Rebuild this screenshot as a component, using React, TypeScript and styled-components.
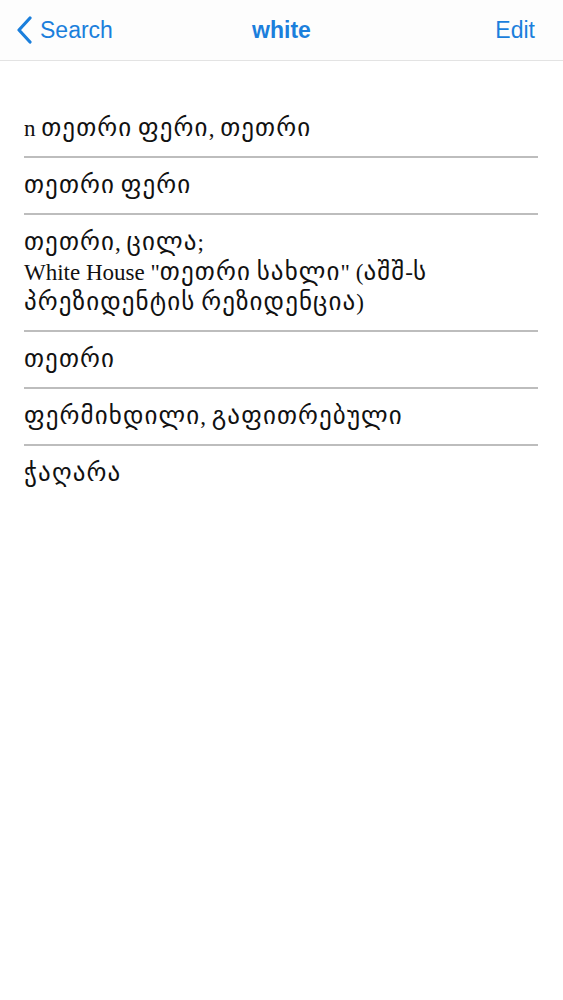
import React from "react";
import styled, { createGlobalStyle } from "styled-components";

const Global = createGlobalStyle`
  html, body { margin: 0; padding: 0; background: #ffffff; }
  body { font-family: "Liberation Sans", "DejaVu Sans", sans-serif; }
`;

const Page = styled.div`
  width: 563px;
  min-height: 1000px;
  background: #ffffff;
`;

const NavBar = styled.header`
  height: 60px;
  display: grid;
  grid-template-columns: 1fr auto 1fr;
  align-items: center;
  padding: 0 28px 0 28px;
  border-bottom: 1px solid #e3e3e3;
  background: #fdfdfd;
  color: #1b7fdc;
  font-family: "Liberation Sans", "Roboto", sans-serif;
`;

const BackButton = styled.div`
  display: flex;
  align-items: center;
  gap: 6px;
  font-size: 23px;
  justify-self: start;
  margin-left: -12px;
`;

const Title = styled.div`
  font-size: 23px;
  font-weight: 700;
  justify-self: center;
`;

const EditButton = styled.div`
  font-size: 23px;
  justify-self: end;
`;

const List = styled.ul`
  list-style: none;
  margin: 0;
  padding: 40px 25px 0 24px;
`;

const Row = styled.li<{ $last?: boolean }>`
  padding: 13px 0 12px;
  font-family: "Liberation Serif", "DejaVu Sans", serif;
  font-size: 23px;
  line-height: 30px;
  color: #111111;
  border-bottom: ${(p) => (p.$last ? "none" : "2px solid #bdbdbd")};
`;

const Geo = styled.span`
  font-family: "DejaVu Sans", sans-serif;
  font-size: 25px;
  letter-spacing: 1.1px;
  line-height: 1;
`;

const entries: string[][] = [
  ["n თეთრი ფერი, თეთრი"],
  ["თეთრი ფერი"],
  ["თეთრი, ცილა;", "White House \"თეთრი სახლი\" (აშშ-ს", "პრეზიდენტის რეზიდენცია)"],
  ["თეთრი"],
  ["ფერმიხდილი, გაფითრებული"],
  ["ჭაღარა"],
];

function renderLine(text: string) {
  const parts = text.split(/([\u10A0-\u10FF]+)/);
  return parts.map((p, i) =>
    /[\u10A0-\u10FF]/.test(p) ? <Geo key={i}>{p}</Geo> : <React.Fragment key={i}>{p}</React.Fragment>
  );
}

export default function App() {
  return (
    <Page>
      <Global />
      <NavBar>
        <BackButton>
          <svg width="18" height="28" viewBox="0 0 18 28" fill="none">
            <path d="M14 2 L3 14 L14 26" stroke="#1b7fdc" strokeWidth="3.2" strokeLinecap="round" strokeLinejoin="round" />
          </svg>
          Search
        </BackButton>
        <Title>white</Title>
        <EditButton>Edit</EditButton>
      </NavBar>
      <List>
        {entries.map((lines, i) => (
          <Row key={i} $last={i === entries.length - 1}>
            {lines.map((l, j) => (
              <React.Fragment key={j}>
                {j > 0 && <br />}
                {renderLine(l)}
              </React.Fragment>
            ))}
          </Row>
        ))}
      </List>
    </Page>
  );
}
